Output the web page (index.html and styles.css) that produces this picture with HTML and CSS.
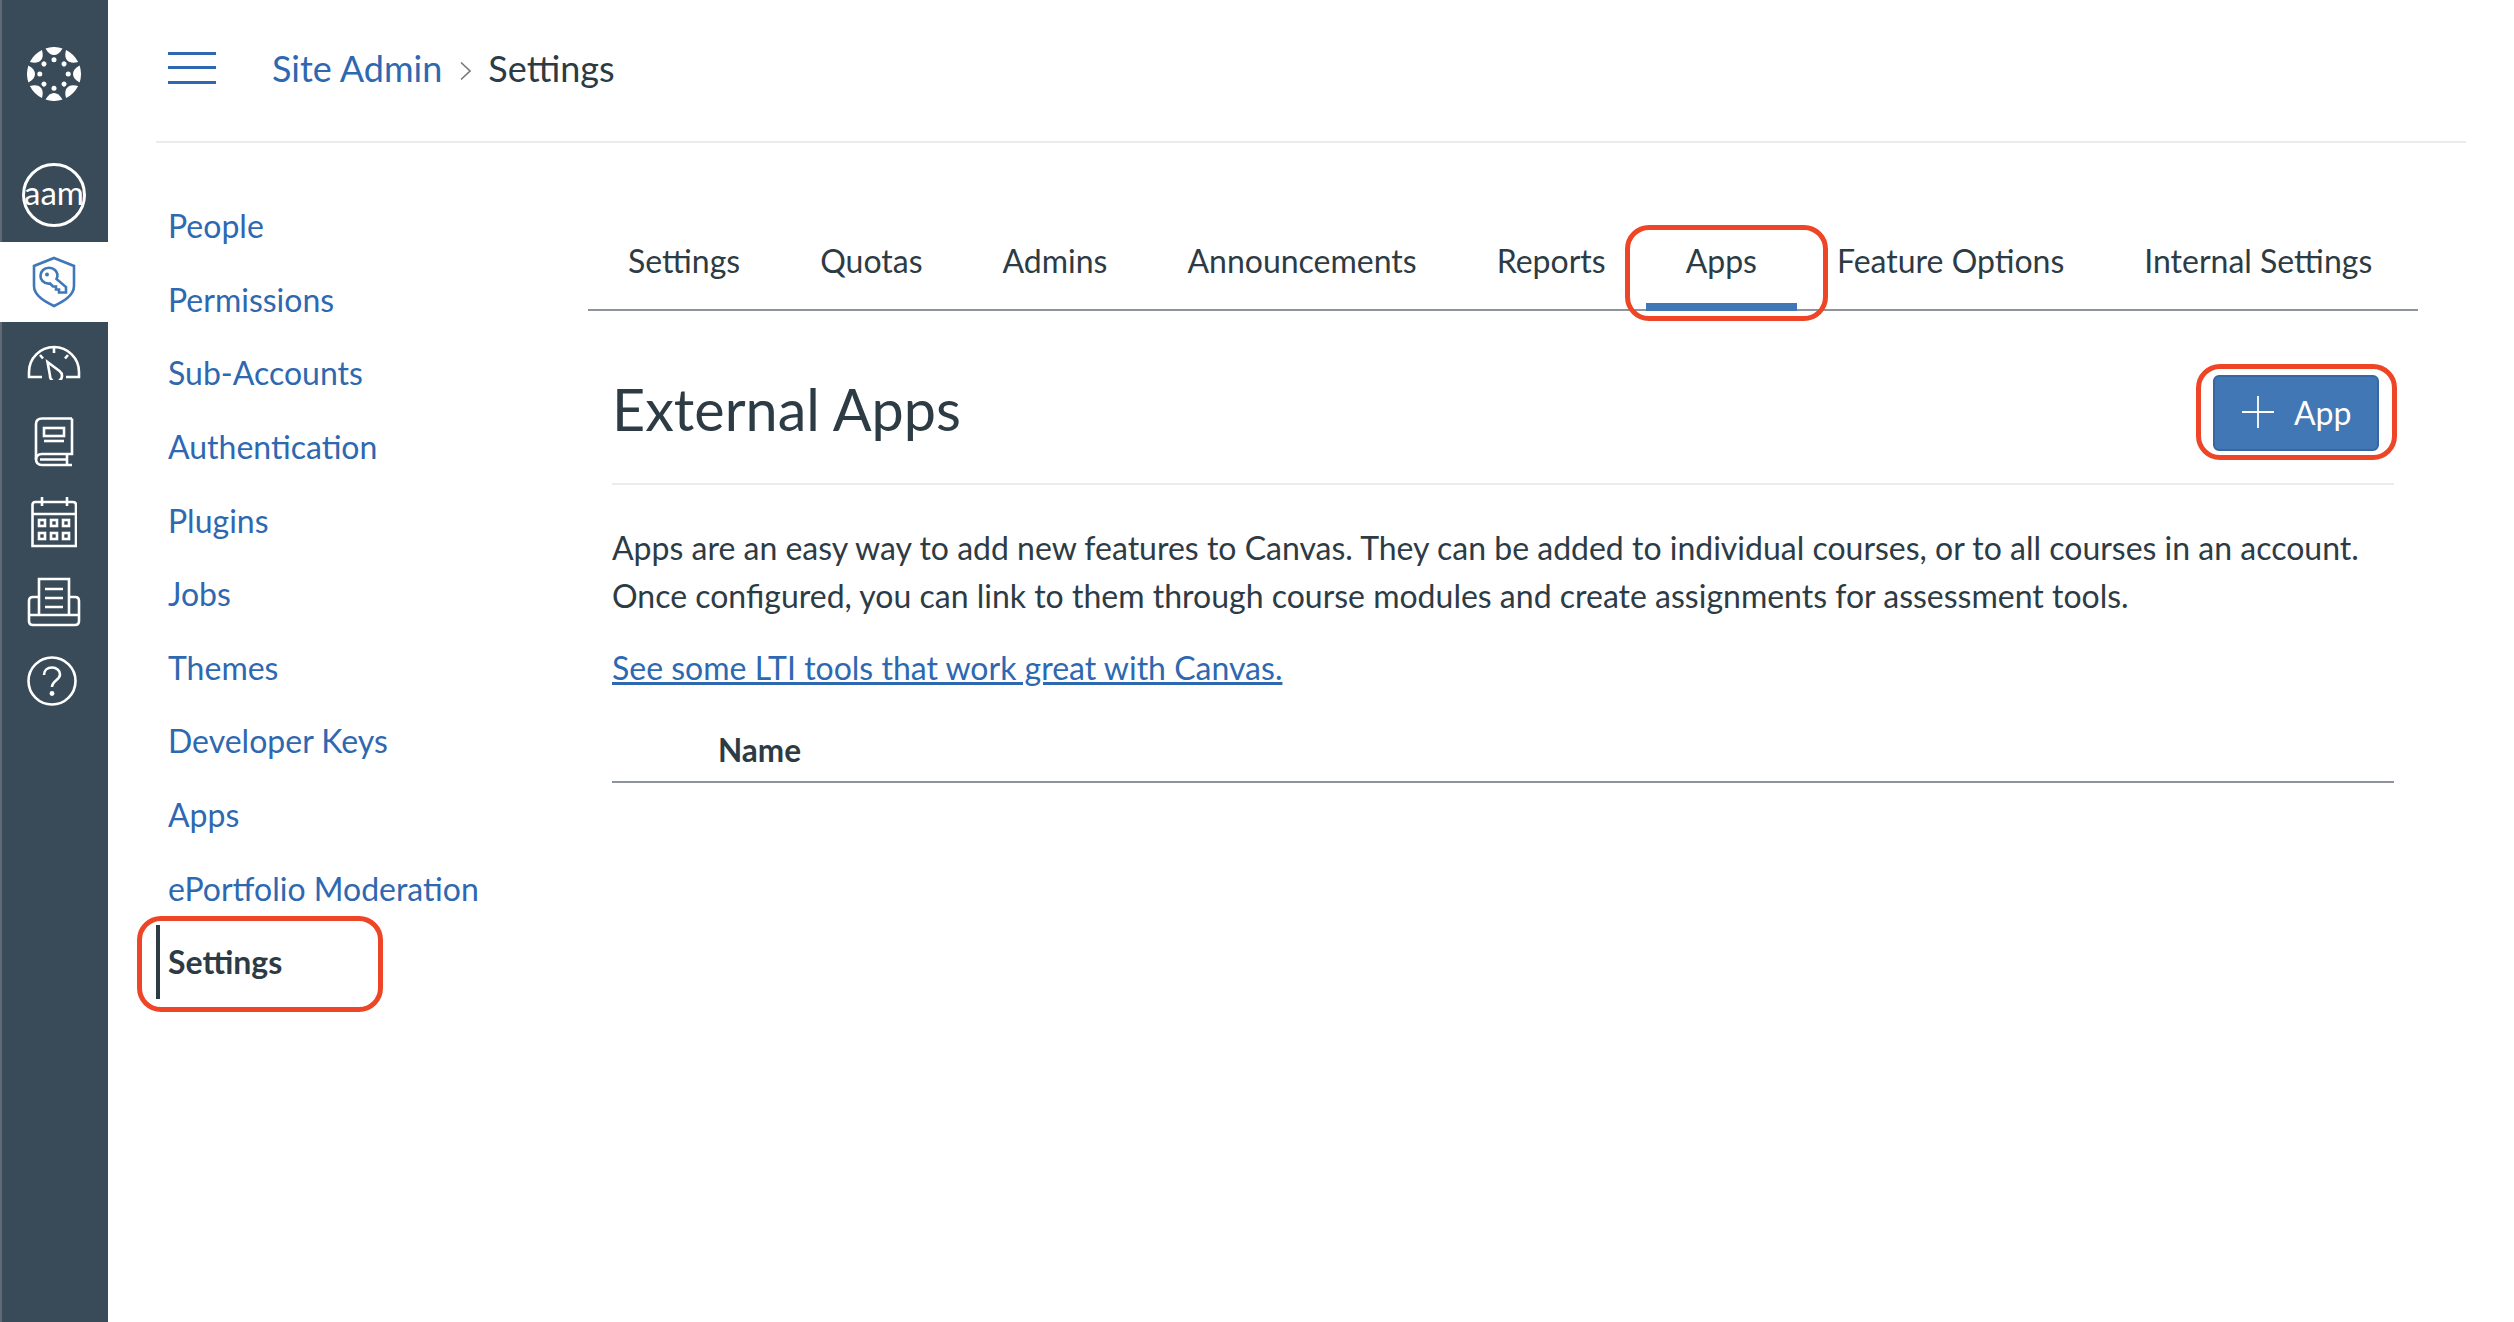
FILE: index.html
```html
<!DOCTYPE html>
<html lang="en">

<head>
    <meta charset="UTF-8">
    <title>External Apps</title>
    <link rel="stylesheet" href="styles.css">
</head>

<body>
    <div class="app">

        <nav class="rail">
            <a class="rail-item logo-item" href="#">
                <svg width="54" height="54" viewBox="-27 -27 54 54" fill="#fff">
                    <defs>
                        <path id="petal" d="M-8.5 -25.6A27 27 0 0 1 8.5 -25.6C6 -21 3 -19 0 -19C-3 -19 -6 -21 -8.5 -25.6Z"></path>
                        <circle id="dot" cx="0" cy="-14.2" r="2.5"></circle>
                    </defs>
                    <use href="#petal"></use>
                    <use href="#petal" transform="rotate(45)"></use>
                    <use href="#petal" transform="rotate(90)"></use>
                    <use href="#petal" transform="rotate(135)"></use>
                    <use href="#petal" transform="rotate(180)"></use>
                    <use href="#petal" transform="rotate(225)"></use>
                    <use href="#petal" transform="rotate(270)"></use>
                    <use href="#petal" transform="rotate(315)"></use>
                    <use href="#dot"></use>
                    <use href="#dot" transform="rotate(45)"></use>
                    <use href="#dot" transform="rotate(90)"></use>
                    <use href="#dot" transform="rotate(135)"></use>
                    <use href="#dot" transform="rotate(180)"></use>
                    <use href="#dot" transform="rotate(225)"></use>
                    <use href="#dot" transform="rotate(270)"></use>
                    <use href="#dot" transform="rotate(315)"></use>
                </svg>
            </a>
            <a class="rail-item avatar-item" href="#"><span class="avatar">aam</span></a>
            <a class="rail-item active" href="#">
                <svg width="44" height="52" viewBox="0 0 44 52" fill="none" stroke="#3f78b8" stroke-width="2.6">
                    <path d="M22 2L42 10V30C42 40 30 46 22 50C14 46 2 40 2 30V10Z"></path>
                    <path d="M11 14C14 11 20 11 23 14C25.5 16.5 26 20 24.5 23L34 31V36.5H27V33.5H24V30.5H21L18 27.5C15 28 12.5 27 10.5 25C7.500 22 8 17 11 14Z"></path>
                    <circle cx="15" cy="18.500" r="2" fill="#3f78b8" stroke="none"></circle>
                </svg>
            </a>
            <a class="rail-item" href="#">
                <svg width="54" height="36" viewBox="0 0 54 36" fill="none" stroke="#fff" stroke-width="2.6">
                    <path d="M15 33H2V28A25 25 0 0 1 52 28V33H39"></path>
                    <path d="M27 4V9M13 11L16 14.500M41 11L38 14.500"></path>
                    <path d="M20.500 18L32.500 27A6 6 0 1 1 23 31.500Z"></path>
                </svg>
            </a>
            <a class="rail-item" href="#">
                <svg width="40" height="50" viewBox="0 0 40 50" fill="none" stroke="#fff" stroke-width="2.6">
                    <path d="M38 1.500H8C4 1.500 2 3.500 2 7V42C2 46 4 48 8 48H38"></path>
                    <path d="M38 1.500V37H8C4 37 2 39 2 42.500"></path>
                    <path d="M6 42.500H33M33 37V48"></path>
                    <rect x="10" y="11" width="20" height="8"></rect>
                    <path d="M10 24H30"></path>
                </svg>
            </a>
            <a class="rail-item" href="#">
                <svg width="46" height="52" viewBox="0 0 46 52" fill="none" stroke="#fff" stroke-width="2.6">
                    <path d="M4 6H42Q45 6 45 9V50H1.500V9Q1.500 6 4 6ZM1.500 18H45M11 1V10M36 1V10"></path>
                    <rect x="8" y="24" width="6" height="6"></rect>
                    <rect x="20" y="24" width="6" height="6"></rect>
                    <rect x="32" y="24" width="6" height="6"></rect>
                    <rect x="8" y="37" width="6" height="6"></rect>
                    <rect x="20" y="37" width="6" height="6"></rect>
                    <rect x="32" y="37" width="6" height="6"></rect>
                </svg>
            </a>
            <a class="rail-item" href="#">
                <svg width="54" height="50" viewBox="0 0 54 50" fill="none" stroke="#fff" stroke-width="2.6">
                    <path d="M12 37V2H42V37"></path>
                    <path d="M12 20H6Q2 20 2 24V44Q2 48 6 48H48Q52 48 52 44V24Q52 20 48 20H42"></path>
                    <path d="M2 38H52"></path>
                    <path d="M18 12H36M18 21H36M18 30H36"></path>
                </svg>
            </a>
            <a class="rail-item help-item" href="#">
                <svg width="50" height="50" viewBox="0 0 50 50" fill="none" stroke="#fff" stroke-width="2.6">
                    <circle cx="25" cy="25" r="23.500"></circle>
                    <path d="M17 19C17 14 20.500 11.500 25 11.500C29.500 11.500 33 14.500 33 18.500C33 24 25 24.500 25 31"></path>
                    <circle cx="25" cy="37.500" r="2.400" fill="#fff" stroke="none"></circle>
                </svg>
            </a>
        </nav>

        <div class="main">
            <header class="topbar">
                <button class="burger" aria-label="Menu"><span></span><span></span><span></span></button>
                <a class="crumb" href="#">Site Admin</a>
                <svg class="crumb-sep" width="11" height="20" viewBox="0 0 11 20" fill="none" stroke="#77797c" stroke-width="1.6">
                    <path d="M1 1.500L10 10L1 18.500"></path>
                </svg>
                <span class="crumb-now">Settings</span>
            </header>

            <div class="columns">
                <ul class="sidenav">
                    <li><a href="#">People</a></li>
                    <li><a href="#">Permissions</a></li>
                    <li><a href="#">Sub-Accounts</a></li>
                    <li><a href="#">Authentication</a></li>
                    <li><a href="#">Plugins</a></li>
                    <li><a href="#">Jobs</a></li>
                    <li><a href="#">Themes</a></li>
                    <li><a href="#">Developer Keys</a></li>
                    <li><a href="#">Apps</a></li>
                    <li><a href="#">ePortfolio Moderation</a></li>
                    <li class="current"><a href="#">Settings</a><i class="mark"></i></li>
                </ul>

                <section class="panel">
                    <div class="tabs">
                        <a class="tab" href="#">Settings</a>
                        <a class="tab" href="#">Quotas</a>
                        <a class="tab" href="#">Admins</a>
                        <a class="tab" href="#">Announcements</a>
                        <a class="tab" href="#">Reports</a>
                        <a class="tab selected" href="#">Apps<i class="mark"></i></a>
                        <a class="tab" href="#">Feature Options</a>
                        <a class="tab" href="#">Internal Settings</a>
                    </div>

                    <div class="content">
                        <div class="content-head">
                            <h1>External Apps</h1>
                            <button class="add-btn">
                                <svg width="32" height="32" viewBox="0 0 32 32" stroke="#fff" stroke-width="1.800">
                                    <path d="M16 0V32M0 16H32"></path>
                                </svg>
                                App
                                <i class="mark"></i>
                            </button>
                        </div>

                        <p class="intro">Apps are an easy way to add new features to Canvas. They can be added to individual courses, or to all courses in an account. Once configured, you can link to them through course modules and create assignments for assessment tools.</p>
                        <p class="more"><a href="#">See some LTI tools that work great with Canvas.</a></p>

                        <div class="table-head">Name</div>
                    </div>
                </section>
            </div>
        </div>

    </div>
</body>

</html>
```

FILE: styles.css
```css
* {
    box-sizing: border-box;
}

body {
    margin: 0;
    font-family: Lato, "Open Sans", sans-serif;
    color: #2d3b45;
    background: white;
}

a {
    color: #2e68b0;
    text-decoration: none;
}

.app {
    display: flex;
    min-height: 100vh;
}

/* venstre mørke bjælke */
.rail {
    width: 108px;
    flex-shrink: 0;
    background: #394b58;
    border-left: 2px solid #5f6a75;
}

.rail-item {
    display: flex;
    align-items: center;
    justify-content: center;
    height: 80px;
    margin-left: -2px;
}

.rail-item.active {
    background: white;
    margin-left: -2px;
}

.logo-item {
    height: 146px;
    padding-top: 2px;
}

.avatar-item {
    height: 96px;
    padding-top: 2px;
}

.help-item {
    height: 78px;
    padding-right: 4px;
}

.avatar {
    width: 64px;
    height: 64px;
    border: 3px solid white;
    border-radius: 50%;
    display: flex;
    align-items: center;
    justify-content: center;
    color: white;
    font-size: 33px;
    padding-bottom: 6px;
}

.main {
    flex: 1;
    padding: 0 48px;
}

.topbar {
    height: 143px;
    border-bottom: 2px solid #ebebeb;
    display: flex;
    align-items: center;
    padding: 0 0 6px 12px;
}

.burger {
    width: 48px;
    height: 32px;
    padding: 0;
    margin-right: 56px;
    border: 0;
    background: none;
    display: flex;
    flex-direction: column;
    justify-content: space-between;
}

.burger span {
    display: block;
    height: 3px;
    background: #2e68b0;
}

.crumb,
.crumb-now {
    font-size: 36px;
}

.crumb-sep {
    margin: 6px 17px 0 18px;
}

.columns {
    display: flex;
}

.sidenav {
    width: 432px;
    flex-shrink: 0;
    list-style: none;
    margin: 0;
    padding: 46px 0 0 0;
}

.sidenav li {
    height: 73.6px;
    display: flex;
    align-items: center;
    padding-left: 12px;
    font-size: 32px;
}

.sidenav .current {
    position: relative;
    border-left: 4px solid #2d3b45;
    padding-left: 8px;
    font-weight: bold;
}

.sidenav .current a {
    color: #2d3b45;
}

.sidenav .current .mark {
    left: -23px;
    top: -9px;
    width: 246px;
    height: 96px;
}

/* røde markeringer ovenpå */
.mark {
    position: absolute;
    border: 5.5px solid #ee4527;
    border-radius: 24px;
    pointer-events: none;
}

.panel {
    width: 1830px;
}

.tabs {
    display: flex;
    margin-top: 72px;
    height: 96px;
    border-bottom: 2px solid #8f939b;
}

.tab {
    position: relative;
    color: #2d3b45;
    font-size: 32px;
    height: 96px;
    padding: 26px 40px 0;
}

.tab.selected::after {
    content: "";
    position: absolute;
    left: 0;
    right: 0;
    bottom: 0;
    height: 8px;
    background: #4277b5;
}

.tab .mark {
    left: -21px;
    top: 10px;
    width: 203px;
    height: 96px;
}

.content {
    padding: 0 24px;
}

.content-head {
    display: flex;
    align-items: center;
    justify-content: space-between;
    padding: 64px 15px 32px 0;
    border-bottom: 2px solid #ebebeb;
}

h1 {
    margin: 0 0 8px;
    font-size: 57.5px;
    line-height: 60px;
    font-weight: normal;
}

.add-btn {
    position: relative;
    width: 166px;
    height: 76px;
    display: flex;
    align-items: center;
    gap: 20px;
    padding: 0 0 2px 27px;
    font-family: inherit;
    font-size: 32px;
    color: white;
    background: #4277b5;
    border: 2px solid #38669e;
    border-radius: 6px;
}

.add-btn .mark {
    left: -19px;
    top: -13px;
    width: 201px;
    height: 96px;
}

.intro {
    margin: 39px 0 0;
    font-size: 32px;
    line-height: 48px;
}

.more {
    margin: 24px 0 0;
    font-size: 32px;
    line-height: 48px;
}

.more a {
    text-decoration: underline;
}

.table-head {
    margin-top: 39px;
    padding: 0 0 12px 106px;
    font-size: 31.5px;
    font-weight: bold;
    border-bottom: 2px solid #8f939b;
}
```
